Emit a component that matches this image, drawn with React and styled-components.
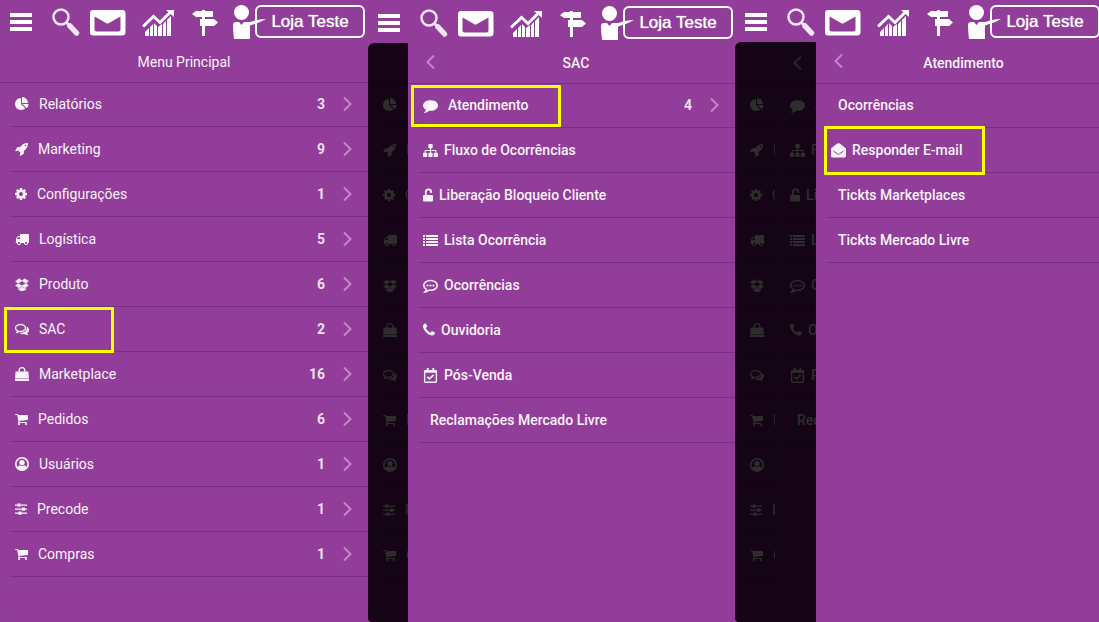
import React from "react"
import styled, { createGlobalStyle } from "styled-components"
import { FaRegCalendarCheck } from "react-icons/fa"

const GlobalStyle = createGlobalStyle`
  * {
    box-sizing: border-box;
  }
  body {
    margin: 0;
    background-color: #913d99;
    font-family: Roboto, sans-serif;
    font-size: 14px;
  }
`

const Page = styled.main`
  display: grid;
  grid-template-columns: minmax(0, 368fr) minmax(0, 367fr) minmax(0, 364fr);
  min-height: 100vh;
  overflow: hidden;
`

const Phone = styled.section`
  display: flex;
  flex-direction: column;
  min-width: 367px;
  padding-top: ${(props) => (props.$lowered ? "1px" : "0")};
`

const Header = styled.header`
  display: grid;
  grid-template-columns: 42px 38px 52px 50px 41px 22px 110px;
  align-items: start;
  height: 42px;
  padding: 5px 0 0 10px;
`

const HeaderButton = styled.button`
  display: block;
  width: max-content;
  height: 34px;
  padding: 0;
  border: 0;
  background: none;
  color: white;
  cursor: pointer;

  svg {
    display: block;
  }
`

const Person = styled.svg`
  position: relative;
  z-index: 1;
`

const StoreButton = styled.button`
  height: 33px;
  padding: 0;
  border: 2px solid white;
  border-radius: 6px;
  background: none;
  color: white;
  font-family: "Liberation Sans", Arial, sans-serif;
  font-size: 17px;
  text-shadow: 0 0 1px white;
  cursor: pointer;
`

const Body = styled.div`
  display: flex;
  flex: 1;
  border-radius: 6px 0 0 4px;
  background-color: ${(props) => (props.$dark ? "#150416" : "#913d99")};
  overflow: hidden;
`

const Strip = styled.div`
  --ink: #2d2d2d;
  --soft: #2a2629;
  --line: #110312;
  flex: none;
  width: ${(props) => props.$width};
  overflow: hidden;
  pointer-events: none;
`

const Drawer = styled.nav`
  --ink: #faf3fb;
  --soft: #c488c9;
  --line: #783180;
  flex: 1;
  min-width: 0;
  background-color: #913d99;
`

const TitleBar = styled.div`
  display: flex;
  align-items: center;
  height: ${(props) => (props.$tall ? "41px" : "40px")};
  padding: 0 18px;
  box-shadow: 0 1px 0 var(--line);

  svg {
    flex: none;
  }
`

const BackButton = styled.button`
  display: block;
  padding: 0;
  border: 0;
  background: none;
  color: var(--soft);
`

const Title = styled.h2`
  flex: 1;
  margin: 0;
  color: var(--ink);
  font-size: 14px;
  font-weight: ${(props) => (props.$strong ? 500 : 400)};
  line-height: 20px;
  text-align: center;
`

const List = styled.ul`
  margin: 0;
  padding: 0 0 0 10px;
  list-style: none;
`

const Row = styled.li`
  position: relative;
  height: 45px;
  border-bottom: 1px solid var(--line);
`

const RowLink = styled.a`
  display: flex;
  align-items: center;
  height: 44px;
  padding: 0 16px 0 ${(props) => (props.$indent ? "12px" : "5px")};
  color: var(--ink);
  font-weight: ${(props) => (props.$strong ? 500 : 400)};
  text-decoration: none;
  white-space: nowrap;

  svg {
    flex: none;
  }
`

const Label = styled.span`
  flex: 1;
  margin-left: ${(props) => props.$gap};
`

const Count = styled.span`
  margin-right: 18px;
  color: #eedff0;
  font-weight: 700;
`

const Highlight = styled.span`
  position: absolute;
  left: ${(props) => props.$left};
  top: ${(props) => props.$top};
  width: ${(props) => props.$width};
  height: ${(props) => props.$height};
  border: 3px solid #ffff00;
  border-radius: 1px;
  pointer-events: none;
`

// [viewBox, width, shape]
const glyphs = {
  pie: ["0 0 1792 1792", 14, <path d="M768 890l546 546q-106 108-247.5 168t-298.5 60q-209 0-385.5-103t-279.5-279.5-103-385.5 103-385.5 279.5-279.5 385.5-103v762zm187 6h773q0 157-60 298.5t-168 247.5zm709-128h-768v-768q209 0 385.5 103t279.5 279.5 103 385.5z" />],
  rocket: ["0 0 1664 1792", 13, <path d="M1440 448q0-40-28-68t-68-28-68 28-28 68 28 68 68 28 68-28 28-68zm224-288q0 249-75.5 430.5t-253.5 360.5q-81 80-195 176l-20 379q-2 16-16 26l-384 224q-7 4-16 4-12 0-23-9l-64-64q-13-14-8-32l85-276-281-281-276 85q-3 1-9 1-14 0-23-9l-64-64q-17-19-5-39l224-384q10-14 26-16l379-20q96-114 176-195 188-187 358-258t431-71q14 0 24 9.5t10 22.5z" />],
  cog: ["128 0 1536 1792", 12, <path d="M1152 896q0-106-75-181t-181-75-181 75-75 181 75 181 181 75 181-75 75-181zm512-109v222q0 12-8 23t-20 13l-185 28q-19 54-39 91 35 50 107 138 10 12 10 25t-9 23q-27 37-99 108t-94 71q-12 0-26-9l-138-108q-44 23-91 38-16 136-29 186-7 28-36 28h-222q-14 0-24.5-8.5t-11.5-21.5l-28-184q-49-16-90-37l-141 107q-10 9-25 9-14 0-25-11-126-114-165-168-7-10-7-23 0-12 8-23 15-21 51-66.5t54-70.5q-27-50-41-99l-183-27q-13-2-21-12.5t-8-23.5v-222q0-12 8-23t19-13l186-28q14-46 39-92-40-57-107-138-10-12-10-24 0-10 9-23 26-36 98.5-107.5t94.5-71.5q13 0 26 10l138 107q44-23 91-38 16-136 29-186 7-28 36-28h222q14 0 24.5 8.5t11.5 21.5l28 184q49 16 90 37l142-107q9-9 24-9 13 0 25 10 129 119 165 170 7 8 7 22 0 12-8 23-15 21-51 66.5t-54 70.5q26 50 41 98l183 28q13 2 21 12.5t8 23.5z" />],
  truck: ["0 0 1792 1792", 14, <path d="M640 1408q0-52-38-90t-90-38-90 38-38 90 38 90 90 38 90-38 38-90zm-384-512h384v-256h-158q-13 0-22 9l-195 195q-9 9-9 22v30zm1280 512q0-52-38-90t-90-38-90 38-38 90 38 90 90 38 90-38 38-90zm256-1088v1024q0 15-4 26.5t-13.5 18.5-16.5 11.5-23.5 6-22.5 2-25.5 0-22.5-.5q0 106-75 181t-181 75-181-75-75-181h-384q0 106-75 181t-181 75-181-75-75-181h-64q-3 0-22.5.5t-25.5 0-22.5-2-23.5-6-16.5-11.5-13.5-18.5-4-26.5q0-26 19-45t45-19v-320q0-8-.5-35t0-38 2.5-34.5 6.5-37 14-30.5 22.5-30l198-198q19-19 50.5-32t58.5-13h160v-192q0-26 19-45t45-19h1024q26 0 45 19t19 45z" />],
  dropbox: ["0 0 1792 1792", 14, <path stroke="currentColor" strokeWidth="70" d="M402 829l494 305-342 285-490-319zm1001 621v108l-490 293v1l-1-1-1 1v-1l-489-293v-108l147 96 342-284v-2l1 1 1-1v2l343 284zm-849-1240l342 285-494 304-338-270zm836 619l338 271-489 319-343-285zm-152-619l490 319-338 270-494-304z" />],
  comments: ["0 0 1792 1792", 14, <path stroke="currentColor" strokeWidth="50" d="M704 384q-153 0-286 52t-211.5 141-78.5 191q0 82 53 158t149 132l97 56-35 84q34-20 62-39l44-31 53 10q78 14 153 14 153 0 286-52t211.5-141 78.5-191-78.5-191-211.5-141-286-52zm0-128q191 0 353.5 68.5t256.5 186.5 94 257-94 257-256.5 186.5-353.5 68.5q-86 0-176-16-124 88-278 128-36 9-86 16h-3q-11 0-20.5-8t-11.5-21q-1-3-1-6.5t.5-6.5 2-6l2.5-5 3.5-5.5 4-5 4.5-5 4-4.5q5-6 23-25t26-29.5 22.5-29 25-38.5 20.5-44q-124-72-195-177t-71-224q0-139 94-257t256.5-186.5 353.5-68.5zm822 1169q10 24 20.5 44t25 38.5 22.5 29 26 29.5 23 25q1 1 4 4.5t4.5 5 4 5 3.5 5.5l2.5 5 2 6 .5 6.5-1 6.5q-3 14-13 22t-22 7q-50-7-86-16-154-40-278-128-90 16-176 16-271 0-472-132 58 4 88 4 161 0 309-45t264-129q125-92 192-212t67-254q0-77-23-152 129 71 204 178t75 230q0 120-71 224.5t-195 176.5z" />],
  bag: ["0 0 14 14", 14, <path d="M0.6 4.500h2.900V3.500a3.500 3.500 0 0 1 7 0V4.500h2.900L14 11.500H0zM4.800 4.500h4.400V3.500a2.200 2.200 0 0 0-4.400 0zM0 12h14v2H0z" fillRule="evenodd" />],
  cart: ["64 0 1664 1792", 13, <path d="M704 1536q0 52-38 90t-90 38-90-38-38-90 38-90 90-38 90 38 38 90zm896 0q0 52-38 90t-90 38-90-38-38-90 38-90 90-38 90 38 38 90zm128-1088v512q0 24-16.5 42.5t-40.5 21.5l-1044 122q13 60 13 70 0 16-24 64h920q26 0 45 19t19 45-19 45-45 19h-1024q-26 0-45-19t-19-45q0-11 8-31.5t16-36 21.5-40 15.5-29.5l-177-823h-204q-26 0-45-19t-19-45 19-45 45-19h256q16 0 28.5 6.5t19.5 15.5 13 24.5 8 26 5.5 29.5 4.5 26h1201q26 0 45 19t19 45z" />],
  user: ["0 0 14 14", 14, <><circle cx="7" cy="7" r="6.200" fill="none" stroke="currentColor" strokeWidth="1.600" /><circle cx="7" cy="5.600" r="2.700" /><path d="M2.200 11q.5-2.500 2.500-2.800 2.300 1.400 4.600 0 2 .3 2.500 2.800Q7 15.500 2.200 11z" /></>],
  sliders: ["0 0 12 14", 12, <path d="M0 2.500h2.500v-1h3v1H12v1.200H5.500v1h-3v-1H0zM0 6.500h7v-1h3v1h2v1.200h-2v1H7v-1H0zM0 10.500h3.500v-1h3v1H12v1.200H6.500v1h-3v-1H0z" />],
  comment: ["0 0 1792 1792", 15, <path d="M1792 896q0 174-120 321.5t-326 233-450 85.5q-70 0-145-8-198 175-460 242-49 14-114 22-17 2-30.500-9t-17.500-29v-1q-3-4-.5-12t2-10 4.500-9.500l6-9 7-8.500 8-9q7-8 31-34.500t34.500-38 31-39.500 32.500-51 27-59 26-76q-157-89-247.500-220t-90.500-281q0-130 71-248.500t191-204.500 286-136.500 348-50.500q244 0 450 85.500t326 233 120 321.500z" />],
  sitemap: ["0 0 1792 1792", 15, <path d="M1792 1248v320q0 40-28 68t-68 28h-320q-40 0-68-28t-28-68v-320q0-40 28-68t68-28h96v-192h-512v192h96q40 0 68 28t28 68v320q0 40-28 68t-68 28h-320q-40 0-68-28t-28-68v-320q0-40 28-68t68-28h96v-192h-512v192h96q40 0 68 28t28 68v320q0 40-28 68t-68 28h-320q-40 0-68-28t-28-68v-320q0-40 28-68t68-28h96v-192q0-52 38-90t90-38h512v-192h-96q-40 0-68-28t-28-68v-320q0-40 28-68t68-28h320q40 0 68 28t28 68v320q0 40-28 68t-68 28h-96v192h512q52 0 90 38t38 90v192h96q40 0 68 28t28 68z" />],
  unlock: ["0 0 10 14", 10, <><rect y="7" width="10" height="6.500" rx="1" /><path d="M2.800 7.500V4a2.700 2.700 0 0 1 5.400 0V5" fill="none" stroke="currentColor" strokeWidth="1.800" /></>],
  list: ["0 0 15 15", 15, <path d="M0 2h2v2H0zM3 2h12v2H3zM0 5h2v2H0zM3 5h12v2H3zM0 8h2v2H0zM3 8h12v2H3zM0 11h2v2H0zM3 11h12v2H3z" />],
  commenting: ["0 0 15 15", 15, <><path d="M7.500 2.500c3.700 0 6.700 2.200 6.700 4.900s-3 4.900-6.700 4.900q-.8 0-1.500-.1-1.600 1.300-4 1.700 1-1.100 1.300-2.500C1.800 10.500.8 9.100.8 7.400c0-2.700 3-4.900 6.700-4.900z" fill="none" stroke="currentColor" strokeWidth="1.600" /><circle cx="4.500" cy="7.500" r="1.100" /><circle cx="7.500" cy="7.500" r="1.100" /><circle cx="10.500" cy="7.500" r="1.100" /></>],
  phone: ["192 128 1408 1536", 12, <path d="M1600 1240q0 27-10 70.500t-21 68.500q-21 50-122 106-94 51-186 51-27 0-53-3.500t-57.500-12.500-47-14.500-55.500-20.500-49-18q-98-35-175-83-127-79-264-216t-216-264q-48-77-83-175-3-9-18-49t-20.500-55.500-14.500-47-12.500-57.500-3.500-53q0-92 51-186 56-101 106-122 25-11 68.500-21t70.500-10q14 0 21 3 18 6 53 76 11 19 30 54t35 63.500 31 53.500q3 4 17.500 25t21.500 35.500 7 28.500q0 20-28.500 50t-62 55-62 53-28.500 46q0 9 5 22.500t8.500 20.500 14 24 11.500 19q76 137 174 235t235 174q2 1 19 11.500t24 14 20.500 8.500 22.500 5q18 0 46-28.500t53-62 55-62 50-28.500q14 0 28.500 7t35.500 21.500 25 17.500q25 15 53.500 31t63.500 35 54 30q70 35 76 53 3 7 3 21z" />],
  envelope: ["0 0 15 15", 15, <><path d="M0 5.500Q4 2 6.300.6q1.200-.8 2.400 0Q11 2 15 5.500V13a1.500 1.500 0 0 1-1.500 1.500h-12A1.500 1.500 0 0 1 0 13z" /><path d="M2.500 8l3.800 2.800q1.200.8 2.400 0L12.500 8" fill="none" stroke="#913d99" strokeWidth="1" /></>],
}

const Glyph = ({ name }) => {
  if (name === "calendar") return <FaRegCalendarCheck size={15} />
  const [viewBox, width, shape] = glyphs[name]
  return (
    <svg viewBox={viewBox} width={width} height={width > 14 ? 15 : 14} fill="currentColor">
      {shape}
    </svg>
  )
}

const Chevron = ({ left }) => (
  <svg width="9" height="14" viewBox="0 0 9 14" fill="none" stroke="var(--soft)" strokeWidth="2">
    <path d={left ? "M8 0.500L1.500 7L8 13.500" : "M1 0.500L7.500 7L1 13.500"} />
  </svg>
)

const mainMenu = {
  title: "Menu Principal",
  gap: "10px",
  items: [
    { label: "Relatórios", icon: "pie", count: 3 },
    { label: "Marketing", icon: "rocket", count: 9 },
    { label: "Configurações", icon: "cog", count: 1 },
    { label: "Logística", icon: "truck", count: 5 },
    { label: "Produto", icon: "dropbox", count: 6 },
    { label: "SAC", icon: "comments", count: 2, mark: ["-6px", "0", "110px", "46px"] },
    { label: "Marketplace", icon: "bag", count: 16 },
    { label: "Pedidos", icon: "cart", count: 6 },
    { label: "Usuários", icon: "user", count: 1 },
    { label: "Precode", icon: "sliders", count: 1 },
    { label: "Compras", icon: "cart", count: 1 },
  ],
}

// order of the main menu once another drawer is open over it
const coveredMenu = {
  ...mainMenu,
  items: ["Relatórios", "Marketing", "Configurações", "Logística", "Produto", "Marketplace", "SAC", "Pedidos", "Usuários", "Precode", "Compras"].map(
    (label) => mainMenu.items.find((item) => item.label === label)
  ),
}

const sacMenu = {
  title: "SAC",
  back: true,
  strong: true,
  gap: "6px",
  items: [
    { label: "Atendimento", icon: "comment", count: 4, gap: "10px", mark: ["-7px", "2px", "150px", "42px"] },
    { label: "Fluxo de Ocorrências", icon: "sitemap" },
    { label: "Liberação Bloqueio Cliente", icon: "unlock" },
    { label: "Lista Ocorrência", icon: "list" },
    { label: "Ocorrências", icon: "commenting" },
    { label: "Ouvidoria", icon: "phone" },
    { label: "Pós-Venda", icon: "calendar" },
    { label: "Reclamações Mercado Livre" },
  ],
}

const supportMenu = {
  title: "Atendimento",
  back: true,
  strong: true,
  tall: true,
  gap: "6px",
  items: [
    { label: "Ocorrências" },
    { label: "Responder E-mail", icon: "envelope", mark: ["-2px", "-2px", "161px", "49px"] },
    { label: "Tickts Marketplaces" },
    { label: "Tickts Mercado Livre" },
  ],
}

const Menu = ({ menu }) => (
  <>
    <TitleBar $tall={menu.tall}>
      {menu.back && (
        <BackButton aria-label="Voltar">
          <Chevron left />
        </BackButton>
      )}
      <Title $strong={menu.strong}>{menu.title}</Title>
    </TitleBar>
    <List>
      {menu.items.map((item) => (
        <Row key={item.label}>
          <RowLink href="#" $strong={menu.strong} $indent={!item.icon}>
            {item.icon && <Glyph name={item.icon} />}
            <Label $gap={item.icon ? item.gap || menu.gap : "0"}>{item.label}</Label>
            {item.count && (
              <>
                <Count>{item.count}</Count>
                <Chevron />
              </>
            )}
          </RowLink>
          {item.mark && (
            <Highlight $left={item.mark[0]} $top={item.mark[1]} $width={item.mark[2]} $height={item.mark[3]} />
          )}
        </Row>
      ))}
    </List>
  </>
)

// a covered menu: only the icons and the first letters peek out
const CoveredMenu = ({ menu, width, letters }) => (
  <Strip $width={width} aria-hidden="true">
    <TitleBar $tall={menu.tall}>{menu.back && <Chevron left />}</TitleBar>
    <List>
      {menu.items.map((item) => (
        <Row key={item.label}>
          <RowLink as="div" $strong={menu.strong} $indent={!item.icon}>
            {item.icon && <Glyph name={item.icon} />}
            <Label $gap={item.icon ? item.gap || menu.gap : "0"}>
              {item.label.slice(0, item.icon ? letters : letters + 1)}
            </Label>
          </RowLink>
        </Row>
      ))}
    </List>
  </Strip>
)

const TopBar = () => (
  <Header>
    <HeaderButton aria-label="Menu">
      <svg width="22" height="28" fill="currentColor">
        <path d="M0 5h22v4H0zM0 12h22v4H0zM0 19h22v4H0z" />
      </svg>
    </HeaderButton>
    <HeaderButton aria-label="Buscar">
      <svg width="28" height="28" fill="none" stroke="#f3e6f4">
        <circle cx="9" cy="9" r="7.500" strokeWidth="2.500" />
        <path d="M14.500 14.500L18 18" strokeWidth="3" />
        <path d="M18 18L24.500 25" strokeWidth="5.500" strokeLinecap="round" />
      </svg>
    </HeaderButton>
    <HeaderButton aria-label="Mensagens">
      <svg width="36" height="29" fill="currentColor">
        <path fillRule="evenodd" d="M3 2h29q3.500 0 3.500 3v19.500q0 3-3.500 3H3q-3 0-3-3V5q0-3 3-3zM4.500 8.500V21.500q0 2 2 2h22q2 0 2-2V8.500L19 15q-1.500 1-3 0z" />
      </svg>
    </HeaderButton>
    <HeaderButton aria-label="Indicadores">
      <svg width="32" height="29" fill="currentColor">
        <path d="M3 24l4-4v8H3zM8 19l3-3v12H8zM12 15l3 3v10h-3zM16 19l4-3v12h-4zM21 16l3-3v15h-3zM25 12l4-4v20h-4z" />
        <path d="M1 18.500L11.500 8.500l6.500 6L28 4.500" fill="none" stroke="currentColor" strokeWidth="3" />
        <path d="M24 2h8v7z" />
      </svg>
    </HeaderButton>
    <HeaderButton aria-label="Atalhos">
      <svg width="26" height="29" fill="currentColor">
        <path d="M10 2h3v1h8v6h-8v2h9l4 3.500-4 3.500h-9v10h-3V18H8v-7h2V9H4L0 6 4 3h6z" />
      </svg>
    </HeaderButton>
    <Person width="34" height="34" fill="white">
      <circle cx="8.500" cy="7.500" r="7.500" />
      <path d="M3 17h3l2.500 3 2.500-3h6l7-2q4-1 9-1-5 3-10 4.500l-6 2V34H1q-1-8-1-14 0-3 3-3z" />
    </Person>
    <StoreButton>Loja Teste</StoreButton>
  </Header>
)

const App = () => {
  return (
    <>
      <GlobalStyle />
      <Page>
        <Phone>
          <TopBar />
          <Body>
            <Drawer>
              <Menu menu={mainMenu} />
            </Drawer>
          </Body>
        </Phone>
        <Phone $lowered>
          <TopBar />
          <Body $dark>
            <CoveredMenu menu={coveredMenu} width="40px" letters={1} />
            <Drawer>
              <Menu menu={sacMenu} />
            </Drawer>
          </Body>
        </Phone>
        <Phone>
          <TopBar />
          <Body $dark>
            <CoveredMenu menu={{ ...coveredMenu, tall: true }} width="40px" letters={1} />
            <CoveredMenu menu={{ ...sacMenu, tall: true }} width="41px" letters={2} />
            <Drawer>
              <Menu menu={supportMenu} />
            </Drawer>
          </Body>
        </Phone>
      </Page>
    </>
  )
}

export default App
